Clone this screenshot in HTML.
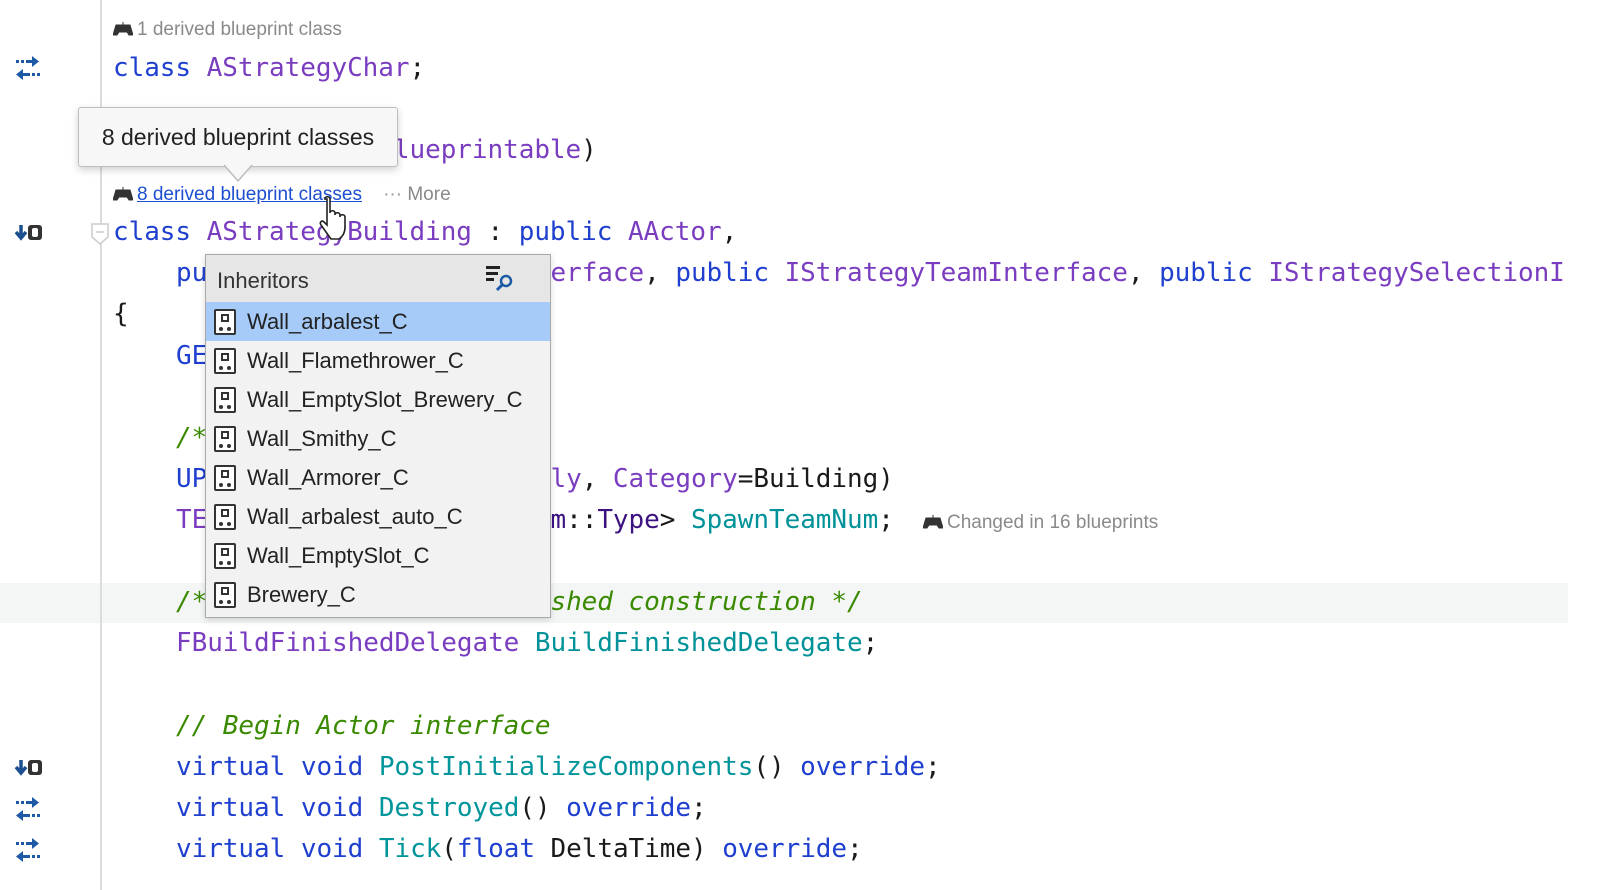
<!DOCTYPE html>
<html><head><meta charset="utf-8"><style>
html,body{margin:0;padding:0}
body{width:1600px;height:890px;background:#fff;overflow:hidden;position:relative;font-family:"DejaVu Sans Mono",monospace;}
#w{position:absolute;left:0;top:0;width:1600px;height:890px;overflow:hidden}
.l{position:absolute;height:41px;line-height:41px;font-size:26px;white-space:pre;color:#1a1a1a;letter-spacing:-0.05px}
.k{color:#1f3fcf}.p{color:#7a3dc0}.t{color:#00959b}.c{color:#3a8a00;font-style:italic}.d{color:#3b1280}.f{color:#009298}
.h{position:absolute;font-family:"Liberation Sans",sans-serif;font-size:19px;color:#8a8a8a;white-space:pre;line-height:24px}
.g{position:absolute;left:14px}
.pad{display:inline-block;width:20px;height:14px;vertical-align:-1px;margin-right:4px}
.row{height:39px;line-height:39px;font-family:"Liberation Sans",sans-serif;font-size:22px;color:#222;white-space:nowrap}
.ic{display:inline-block;width:22px;height:26px;border:2px solid #333;border-radius:2px;box-sizing:border-box;vertical-align:-6px;margin-right:11px;background:#fff;position:relative}
.ic:after{content:"";position:absolute;left:5px;top:3px;width:8px;height:8px;border:2px solid #333;box-sizing:border-box}
.ic:before{content:"";position:absolute;left:3px;bottom:2px;width:12px;height:5px;border-bottom:4px dotted #333}
</style></head><body><div id="w">
<div style="position:absolute;left:0;top:583px;width:1568px;height:40px;background:#f4f6f6"></div>
<div style="position:absolute;left:100px;top:0;width:2px;height:890px;background:#dcdcdc"></div>

<svg class="g" style="top:56px" width="28" height="24" viewBox="0 0 28 24"><g fill="#1c5aa6"><rect x="2" y="4" width="3" height="3"/><rect x="7" y="4" width="3" height="3"/><rect x="12" y="4" width="7" height="3"/><path d="M18 0l7 5.5-7 5.5z"/><path d="M9 13l-7 5.5 7 5.5z"/><rect x="8" y="17" width="8" height="3"/><rect x="18" y="17" width="3" height="3"/><rect x="23" y="17" width="3" height="3"/></g></svg>
<svg class="g" style="top:224px" width="30" height="18" viewBox="0 0 30 18"><path d="M7 1v10M2 8l5 6 5-6" stroke="#1c4f90" stroke-width="3.5" fill="none"/><rect x="14" y="1" width="14" height="15" rx="3" fill="#333"/><rect x="18" y="4" width="6" height="9" rx="2" fill="#fff"/></svg>
<svg class="g" style="top:759px" width="30" height="18" viewBox="0 0 30 18"><path d="M7 1v10M2 8l5 6 5-6" stroke="#1c4f90" stroke-width="3.5" fill="none"/><rect x="14" y="1" width="14" height="15" rx="3" fill="#333"/><rect x="18" y="4" width="6" height="9" rx="2" fill="#fff"/></svg>
<svg class="g" style="top:797px" width="28" height="24" viewBox="0 0 28 24"><g fill="#1c5aa6"><rect x="2" y="4" width="3" height="3"/><rect x="7" y="4" width="3" height="3"/><rect x="12" y="4" width="7" height="3"/><path d="M18 0l7 5.5-7 5.5z"/><path d="M9 13l-7 5.5 7 5.5z"/><rect x="8" y="17" width="8" height="3"/><rect x="18" y="17" width="3" height="3"/><rect x="23" y="17" width="3" height="3"/></g></svg>
<svg class="g" style="top:838px" width="28" height="24" viewBox="0 0 28 24"><g fill="#1c5aa6"><rect x="2" y="4" width="3" height="3"/><rect x="7" y="4" width="3" height="3"/><rect x="12" y="4" width="7" height="3"/><path d="M18 0l7 5.5-7 5.5z"/><path d="M9 13l-7 5.5 7 5.5z"/><rect x="8" y="17" width="8" height="3"/><rect x="18" y="17" width="3" height="3"/><rect x="23" y="17" width="3" height="3"/></g></svg>
<svg style="position:absolute;left:91px;top:223px" width="18" height="22" viewBox="0 0 18 22"><path d="M1 1h16v13l-8 7-8-7z" fill="#fff" stroke="#ccc" stroke-width="1.5"/><path d="M5 9h8" stroke="#ccc" stroke-width="1.5"/></svg>

<div class="h" style="left:113px;top:18px"><svg class="pad" viewBox="0 0 20 14"><path d="M3 3h14l3 10h-4l-2-3H6l-2 3H0z M10 3V0" fill="#333" stroke="#333"/></svg>1 derived blueprint class</div>
<div class="l" style="left:113px;top:48px"><span class="k">class</span> <span class="p">AStrategyChar</span>;</div>
<div class="l" style="left:113px;top:130px">UCLASS(<span class="p">abstract</span>, <span class="p">Blueprintable</span>)</div>
<div class="h" style="left:113px;top:183px"><svg class="pad" viewBox="0 0 20 14"><path d="M3 3h14l3 10h-4l-2-3H6l-2 3H0z M10 3V0" fill="#333" stroke="#333"/></svg><span style="color:#1c4fd0;text-decoration:underline">8 derived blueprint classes</span>    <span style="color:#999">···</span> More</div>
<div class="l" style="left:113px;top:212px"><span class="k">class</span> <span class="p">AStrategyBuilding</span> : <span class="k">public</span> <span class="p">AActor</span>,</div>
<div class="l" style="left:176px;top:253px"><span class="k">public</span> <span class="p">IStrategyInputInterface</span>, <span class="k">public</span> <span class="p">IStrategyTeamInterface</span>, <span class="k">public</span> <span class="p">IStrategySelectionI</span></div>
<div class="l" style="left:113px;top:294px">{</div>
<div class="l" style="left:176px;top:336px"><span class="k">GENERATED_UCLASS_BODY</span>()</div>
<div class="l c" style="left:176px;top:418px">/** team */</div>
<div class="l" style="left:176px;top:459px"><span class="k">UPROPERTY</span>(<span class="p">EditDefaultsOnly</span>, <span class="p">Category</span>=Building)</div>
<div class="l" style="left:176px;top:500px"><span class="p">TEnumAsByte</span>&lt;<span class="p">EStrategyTea</span><span class="d">m</span>::<span class="d">Type</span>&gt; <span class="f">SpawnTeamNum</span>;</div>
<div class="h" style="left:923px;top:511px"><svg class="pad" viewBox="0 0 20 14"><path d="M3 3h14l3 10h-4l-2-3H6l-2 3H0z M10 3V0" fill="#333" stroke="#333"/></svg>Changed in 16 blueprints</div>
<div class="l c" style="left:176px;top:582px">/** called when has finished construction */</div>
<div class="l" style="left:176px;top:623px"><span class="p">FBuildFinishedDelegate</span> <span class="f">BuildFinishedDelegate</span>;</div>
<div class="l c" style="left:176px;top:706px">// Begin Actor interface</div>
<div class="l" style="left:176px;top:747px"><span class="k">virtual</span> <span class="k">void</span> <span class="t">PostInitializeComponents</span>() <span class="k">override</span>;</div>
<div class="l" style="left:176px;top:788px"><span class="k">virtual</span> <span class="k">void</span> <span class="t">Destroyed</span>() <span class="k">override</span>;</div>
<div class="l" style="left:176px;top:829px"><span class="k">virtual</span> <span class="k">void</span> <span class="t">Tick</span>(<span class="k">float</span> DeltaTime) <span class="k">override</span>;</div>

<div style="position:absolute;left:78px;top:107px;width:318px;height:58px;background:#f7f7f7;border:1.5px solid #bdbdbd;border-radius:3px;box-shadow:0 3px 8px rgba(0,0,0,.18);font-family:'Liberation Sans',sans-serif;font-size:23px;color:#222;line-height:58px;text-align:center">8 derived blueprint classes</div>
<svg style="position:absolute;left:224px;top:164px" width="30" height="20"><path d="M0 1l14 16 14-16" fill="#f7f7f7" stroke="#bdbdbd" stroke-width="1.5"/></svg>
<svg style="position:absolute;left:318px;top:196px" width="34" height="46" viewBox="0 0 34 46"><path d="M7 3c0-3 5-3 5 0v14c0-3 5-3 5 0v2c0-3 5-3 5 0v2c0-3 5-3 5 0v10c0 6-3 10-6 12H13L3 29c-2-3 1-5 3-3l3 3V3z" fill="#fff" stroke="#222" stroke-width="1.6"/></svg>

<div style="position:absolute;left:205px;top:254px;width:344px;height:362px;background:#f2f2f2;border:1.5px solid #a9a9a9;box-shadow:0 2px 6px rgba(0,0,0,.15)">
<div style="height:47px;background:#e6e6e6;font-family:'Liberation Sans',sans-serif;font-size:22px;color:#333;line-height:52px;padding-left:11px;position:relative">Inheritors
<svg style="position:absolute;left:280px;top:11px" width="30" height="26" viewBox="0 0 30 26"><g fill="#222"><rect x="0" y="0" width="14" height="3"/><rect x="0" y="6" width="12" height="3"/><rect x="0" y="12" width="8" height="3"/></g><circle cx="20" cy="15" r="5" fill="none" stroke="#1c5aa6" stroke-width="2.5"/><path d="M16 19l-5 5" stroke="#1c5aa6" stroke-width="3"/></svg></div>
<div class="row" style="background:#a6cbf9;padding-left:8px"><span class="ic"></span>Wall_arbalest_C</div>
<div class="row" style="padding-left:8px"><span class="ic"></span>Wall_Flamethrower_C</div>
<div class="row" style="padding-left:8px"><span class="ic"></span>Wall_EmptySlot_Brewery_C</div>
<div class="row" style="padding-left:8px"><span class="ic"></span>Wall_Smithy_C</div>
<div class="row" style="padding-left:8px"><span class="ic"></span>Wall_Armorer_C</div>
<div class="row" style="padding-left:8px"><span class="ic"></span>Wall_arbalest_auto_C</div>
<div class="row" style="padding-left:8px"><span class="ic"></span>Wall_EmptySlot_C</div>
<div class="row" style="padding-left:8px"><span class="ic"></span>Brewery_C</div>
</div>
</div></body></html>
